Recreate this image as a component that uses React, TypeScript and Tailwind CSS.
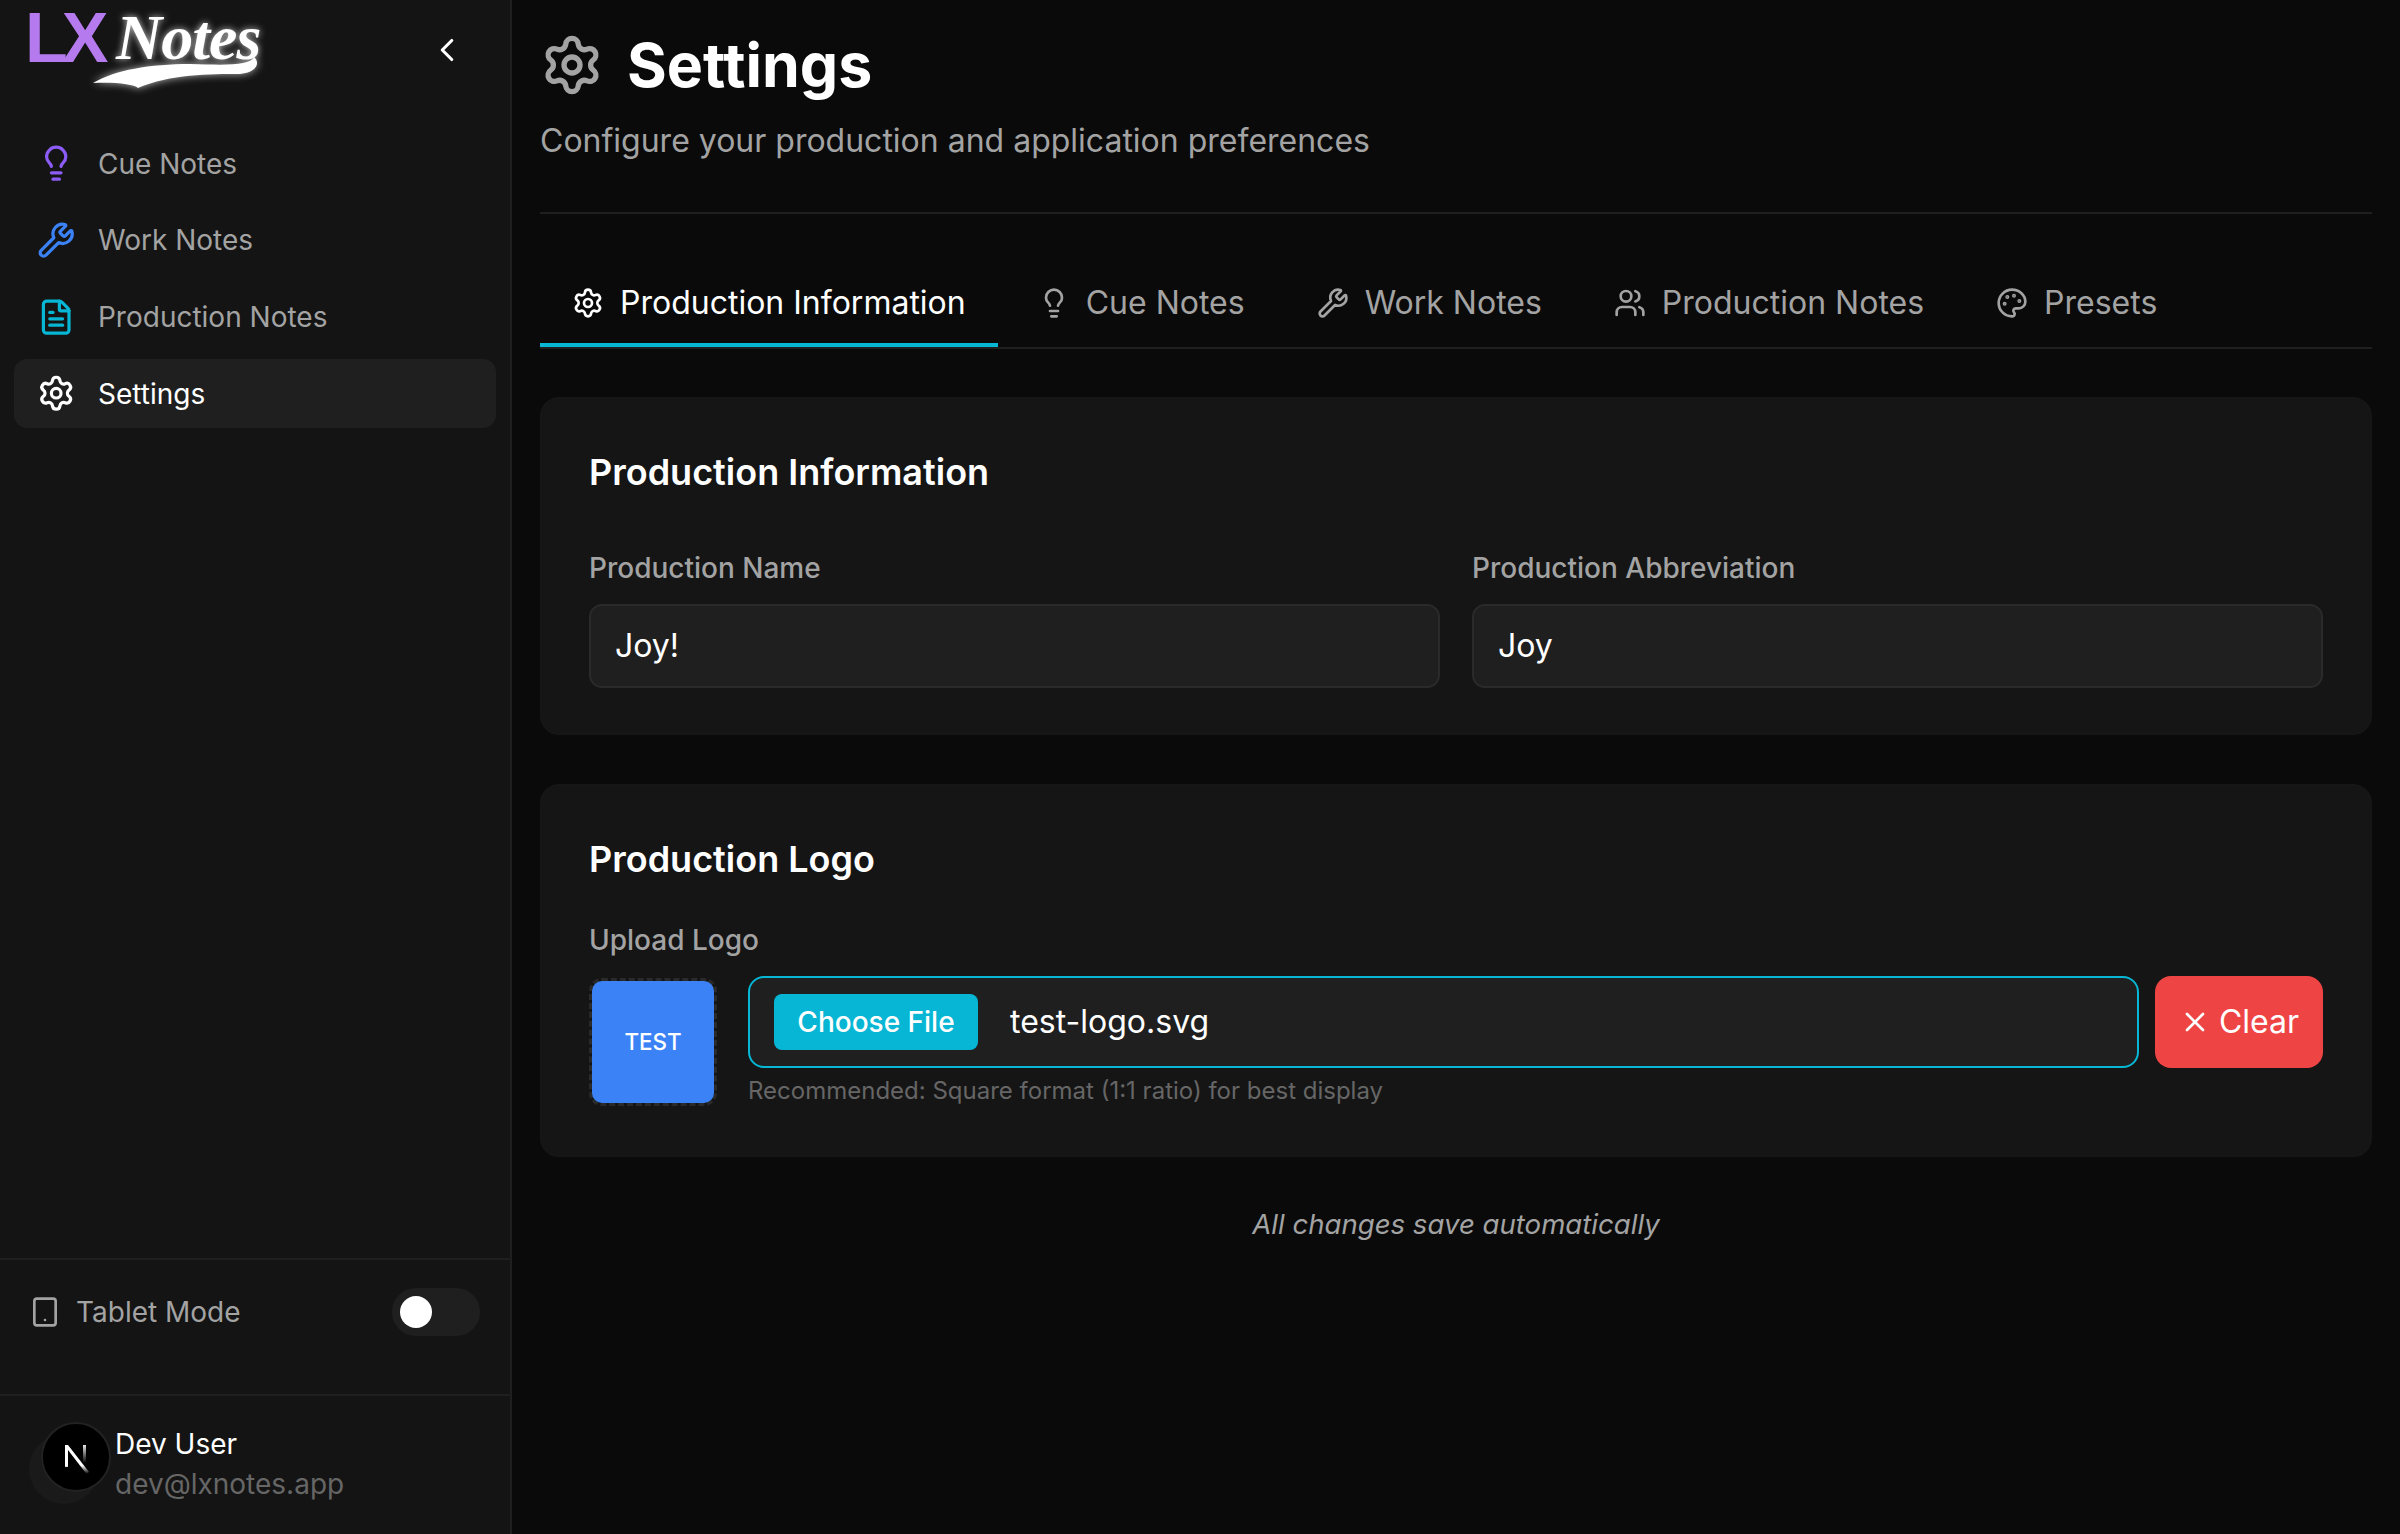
import { ChevronLeft, FileText, Lightbulb, Palette, Settings, Tablet, Users, Wrench, X } from 'lucide-react';

const navItems = [
  { label: 'Cue Notes', icon: Lightbulb, color: 'text-[#8b5cf6]' },
  { label: 'Work Notes', icon: Wrench, color: 'text-[#3b82f6]' },
  { label: 'Production Notes', icon: FileText, color: 'text-[#06b6d4]' },
];

const tabs = [
  { label: 'Cue Notes', icon: Lightbulb },
  { label: 'Work Notes', icon: Wrench },
  { label: 'Production Notes', icon: Users },
  { label: 'Presets', icon: Palette },
];

function Logo() {
  return (
    <div className="relative flex h-[96px] w-[270px] items-start">
      <span className="mt-[3px] ml-[25px] text-[70px] leading-[70px] font-bold tracking-[-6px] text-[#b57bee] [font-family:'Liberation_Sans',sans-serif]">
        LX
      </span>
      <span className="absolute top-[3px] left-[116px] text-[64px] leading-[70px] font-bold tracking-[-1px] text-white italic [font-family:'Liberation_Serif',serif] [text-shadow:0_0_7px_rgba(255,255,255,0.8)]">
        Notes
      </span>
      {/* swoosh under the wordmark */}
      <svg className="absolute top-[54px] left-[90px] drop-shadow-[0_0_4px_rgba(255,255,255,0.7)]" width="172" height="38" viewBox="0 0 172 38">
        <path d="M3 29C25 16 60 10 100 10C135 11 160 12 164 3C170 8 168 18 150 20C120 20 80 20 48 34C44 30 25 28 3 29Z" fill="#fff" />
      </svg>
    </div>
  );
}

function NavItem({ label, icon: Icon, color }: { label: string; icon: typeof Settings; color: string }) {
  return (
    <div className="flex h-[69px] items-center gap-[22.6px] rounded-[13px] px-[23px] text-[#a3a3a3]">
      <Icon size={38.4} strokeWidth={2} className={color} />
      <span>{label}</span>
    </div>
  );
}

function Sidebar() {
  return (
    <aside className="flex h-[1534px] w-[512px] shrink-0 flex-col border-r-2 border-[#1f1f1f] bg-[#141414] text-[28px]">
      <div className="flex h-[129px] shrink-0 items-start justify-between pr-[44px]">
        <Logo />
        <ChevronLeft size={38} strokeWidth={2} className="mt-[31px] text-white" />
      </div>
      <nav className="flex flex-1 flex-col gap-[7.7px] px-[14px]">
        {navItems.map((item) => (
          <NavItem key={item.label} {...item} />
        ))}
        <div className="flex h-[69px] items-center gap-[22.6px] rounded-[13px] bg-[#1f1f1f] px-[23px] text-white">
          <Settings size={38.4} strokeWidth={2} />
          <span>Settings</span>
        </div>
      </nav>
      <div className="flex h-[136px] shrink-0 items-start justify-between border-t-2 border-[#1f1f1f] pt-[28px] pr-[30px] pl-[29px]">
        <div className="flex h-[48px] items-center gap-[15px] text-[#a3a3a3]">
          <Tablet size={32} strokeWidth={2} />
          <span>Tablet Mode</span>
        </div>
        <div className="flex h-[48px] w-[88px] items-center rounded-full bg-[#1f1f1f] px-[8px]">
          <div className="h-[32px] w-[32px] rounded-full bg-white" />
        </div>
      </div>
      <div className="flex h-[140px] shrink-0 items-start border-t-2 border-[#1f1f1f] pt-[26px] pl-[41px]">
        <div className="relative h-[70px] w-[70px] shrink-0 rounded-full border-2 border-[#222] bg-black shadow-[-12px_12px_0_0_#1a1a1a]">
          {/* next.js default avatar */}
          <svg className="absolute top-[17px] left-[17px]" width="34" height="34" viewBox="0 0 34 34">
            <defs>
              <linearGradient id="nextFade" x1="0" y1="0" x2="0" y2="1">
                <stop offset="0" stopColor="#fff" />
                <stop offset="0.7" stopColor="#fff" />
                <stop offset="1" stopColor="#fff" stopOpacity="0" />
              </linearGradient>
              <linearGradient id="nextBar" x1="0" y1="0" x2="0" y2="1">
                <stop offset="0" stopColor="#fff" stopOpacity="0.9" />
                <stop offset="1" stopColor="#fff" stopOpacity="0" />
              </linearGradient>
            </defs>
            <path d="M5 4H8L29 31L26.500 33L8 9V26H5Z" fill="url(#nextFade)" />
            <rect x="23" y="4" width="3" height="18" fill="url(#nextBar)" />
          </svg>
        </div>
        <div className="mt-[2px] ml-[4px] flex flex-col leading-[40px]">
          <span className="text-white">Dev User</span>
          <span className="text-[#666]">dev@lxnotes.app</span>
        </div>
      </div>
    </aside>
  );
}

function Field({ label, value }: { label: string; value: string }) {
  return (
    <div className="flex flex-1 flex-col gap-[16px]">
      <label className="text-[28px] leading-[40px] font-medium text-[#a3a3a3]">{label}</label>
      <div className="flex h-[84px] items-center rounded-[13px] border-2 border-[#2a2a2a] bg-[#1f1f1f] px-[24px] text-[32px] text-white">
        {value}
      </div>
    </div>
  );
}

export default function App() {
  return (
    <div className="flex h-[1534px] w-[2400px] overflow-hidden bg-[#0a0a0a] [font-family:Inter,sans-serif]">
      <Sidebar />
      <main className="flex-1 px-[28px]">
        <header className="h-[214px] border-b-2 border-[#1f1f1f] pt-[26px]">
          <div className="flex h-[78px] items-center gap-[23px]">
            <Settings size={64} strokeWidth={2} className="text-[#a3a3a3]" />
            <h1 className="text-[60.8px] leading-[78px] font-bold text-white">Settings</h1>
          </div>
          <p className="mt-[15px] text-[32px] leading-[44px] text-[#a3a3a3]">Configure your production and application preferences</p>
        </header>

        <div className="mt-[48px] flex h-[87px] items-stretch gap-[8px] border-b-2 border-[#1f1f1f] text-[32px] text-[#a3a3a3]">
          <div className="flex items-center gap-[16px] border-b-4 border-[#06b6d4] px-[32px] text-white">
            <Settings size={32} strokeWidth={2} />
            <span>Production Information</span>
          </div>
          {tabs.map(({ label, icon: Icon }) => (
            <div key={label} className="flex items-center gap-[16px] px-[32px] pb-[4px]">
              <Icon size={32} strokeWidth={2} />
              <span>{label}</span>
            </div>
          ))}
        </div>

        <section className="mt-[48px] rounded-[19px] border-2 border-[#161616] bg-[#151515] px-[47px] pt-[46px] pb-[45px]">
          <h2 className="text-[36px] leading-[54px] font-semibold text-white">Production Information</h2>
          <div className="mt-[49px] flex gap-[32px]">
            <Field label="Production Name" value="Joy!" />
            <Field label="Production Abbreviation" value="Joy" />
          </div>
        </section>

        <section className="mt-[49px] rounded-[19px] border-2 border-[#161616] bg-[#151515] px-[47px] pt-[46px] pb-[47px]">
          <h2 className="text-[36px] leading-[54px] font-semibold text-white">Production Logo</h2>
          <label className="mt-[34px] block text-[28px] leading-[40px] font-medium text-[#a3a3a3]">Upload Logo</label>
          <div className="mt-[16px] flex gap-[16px]">
            <div className="mt-[2px] flex h-[128px] w-[128px] shrink-0 rounded-[13px] border-[3px] border-dashed border-[#2a2a2a]">
              <div className="flex flex-1 items-center justify-center rounded-[10px] bg-[#3b82f6] text-[22.4px] font-medium text-white">TEST</div>
            </div>
            <div className="ml-[15px] flex min-w-0 flex-1 flex-col">
              <div className="flex h-[92px] items-center gap-[32px] rounded-[16px] border-2 border-[#06b6d4] bg-[#1f1f1f] pl-[24px] text-[32px] text-white">
                <button className="flex h-[56px] w-[204px] items-center justify-center rounded-[8px] bg-[#06b6d4] text-[28px] font-medium text-white">
                  Choose File
                </button>
                <span>test-logo.svg</span>
              </div>
              <p className="mt-[6px] text-[24px] leading-[34px] text-[#666]">Recommended: Square format (1:1 ratio) for best display</p>
            </div>
            <button className="flex h-[92px] w-[168px] shrink-0 items-center justify-center gap-[8px] rounded-[16px] bg-[#ef4444] text-[32px] text-white">
              <X size={32} strokeWidth={2} />
              Clear
            </button>
          </div>
        </section>

        <p className="mt-[47px] text-center text-[27.6px] leading-[40px] text-[#a3a3a3] italic">All changes save automatically</p>
      </main>
    </div>
  );
}
